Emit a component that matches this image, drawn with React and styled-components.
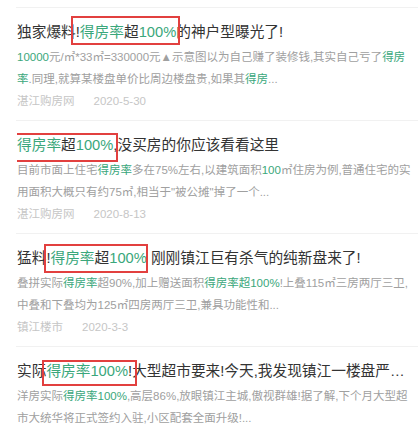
import React from 'react';
import styled, { createGlobalStyle } from 'styled-components';

const GlobalStyle = createGlobalStyle`
  body {
    margin: 0;
    background: #fff;
    font-family: "Liberation Sans", "Noto Sans CJK SC", sans-serif;
  }
`;

const List = styled.div`
  padding: 7px 0 0 16px;
  width: 418px;
  box-sizing: border-box;
`;

const Item = styled.div`
  border-top: 1px solid #f1f1f1;
  padding: 12px 0 10px 1px;
`;

// extra vertical padding so the annotation box is not clipped
const Title = styled.div`
  font-size: 14.7px;
  line-height: 24px;
  height: 24px;
  padding: 10px 12px 10px 0;
  margin: -10px 0;
  color: #333;
  white-space: nowrap;
  overflow: hidden;
  text-overflow: ellipsis;
`;

const Summary = styled.div`
  margin-top: 2px;
  height: 22px;
  font-size: 11.5px;
  line-height: 22px;
  color: #a0a0a0;
  white-space: nowrap;
  & + & {
    margin-top: 0;
  }
`;

const Meta = styled.div`
  margin-top: 2px;
  height: 18px;
  display: flex;
  gap: 19px;
  font-size: 11.5px;
  line-height: 18px;
  color: #c6c6c6;
`;

const Green = styled.span`
  color: #3aa77b;
`;

// red annotation box drawn over the keyword
const Mark = styled.span`
  position: relative;
  &::after {
    content: '';
    position: absolute;
    top: ${(p) => p.$t}px;
    bottom: ${(p) => p.$b}px;
    left: ${(p) => p.$l}px;
    right: ${(p) => p.$r}px;
    border: 2px solid #e2403f;
    pointer-events: none;
  }
`;

const articles = [
  {
    title: (
      <>
        独家爆料!
        <Mark $t={-8} $b={-5} $l={-9} $r={-4}>
          <Green>得房率</Green>超<Green>100%</Green>
        </Mark>
        的神户型曝光了!
      </>
    ),
    lines: [
      <>
        <Green>10000</Green>元/㎡*33㎡=330000元▲示意图以为自己赚了装修钱,其实自己亏了<Green>得房</Green>
      </>,
      <>
        <Green>率</Green>.同理,就算某楼盘单价比周边楼盘贵,如果其<Green>得房</Green>...
      </>,
    ],
    source: '湛江购房网',
    date: '2020-5-30',
  },
  {
    title: (
      <>
        <Mark $t={-4} $b={-9} $l={-5} $r={-5}>
          <Green>得房率</Green>超<Green>100%</Green>
        </Mark>
        ,没买房的你应该看看这里
      </>
    ),
    lines: [
      <>
        目前市面上住宅<Green>得房率</Green>多在75%左右,以建筑面积<Green>100</Green>㎡住房为例,普通住宅的实
      </>,
      <>用面积大概只有约75㎡,相当于"被公摊"掉了一个...</>,
    ],
    source: '湛江购房网',
    date: '2020-8-13',
  },
  {
    title: (
      <>
        猛料!
        <Mark $t={-6} $b={-7} $l={-6} $r={-1}>
          <Green>得房率</Green>超<Green>100%</Green>
        </Mark>{' '}
        刚刚镇江巨有杀气的纯新盘来了!
      </>
    ),
    lines: [
      <>
        叠拼实际<Green>得房率</Green>超90%,加上赠送面积<Green>得房率超100%</Green>!上叠115㎡三房两厅三卫,
      </>,
      <>中叠和下叠均为125㎡四房两厅三卫,兼具功能性和...</>,
    ],
    source: '镇江楼市',
    date: '2020-3-3',
  },
  {
    title: (
      <>
        实际
        <Mark $t={-3} $b={-7} $l={-4} $r={-5}>
          <Green>得房率100%</Green>!
        </Mark>
        大型超市要来!今天,我发现镇江一楼盘严重低估了周边
      </>
    ),
    lines: [
      <>
        洋房实际<Green>得房率100%</Green>,高层86%,放眼镇江主城,傲视群雄!据了解,下个月大型超
      </>,
      <>市大统华将正式签约入驻,小区配套全面升级!...</>,
    ],
    source: '镇江楼市',
    date: '2020-2-18',
  },
];

export default function App() {
  return (
    <>
      <GlobalStyle />
      <List>
        {articles.map((a, i) => (
          <Item key={i}>
            <Title>{a.title}</Title>
            {a.lines.map((line, j) => (
              <Summary key={j}>{line}</Summary>
            ))}
            <Meta>
              <span>{a.source}</span>
              <span>{a.date}</span>
            </Meta>
          </Item>
        ))}
      </List>
    </>
  );
}
